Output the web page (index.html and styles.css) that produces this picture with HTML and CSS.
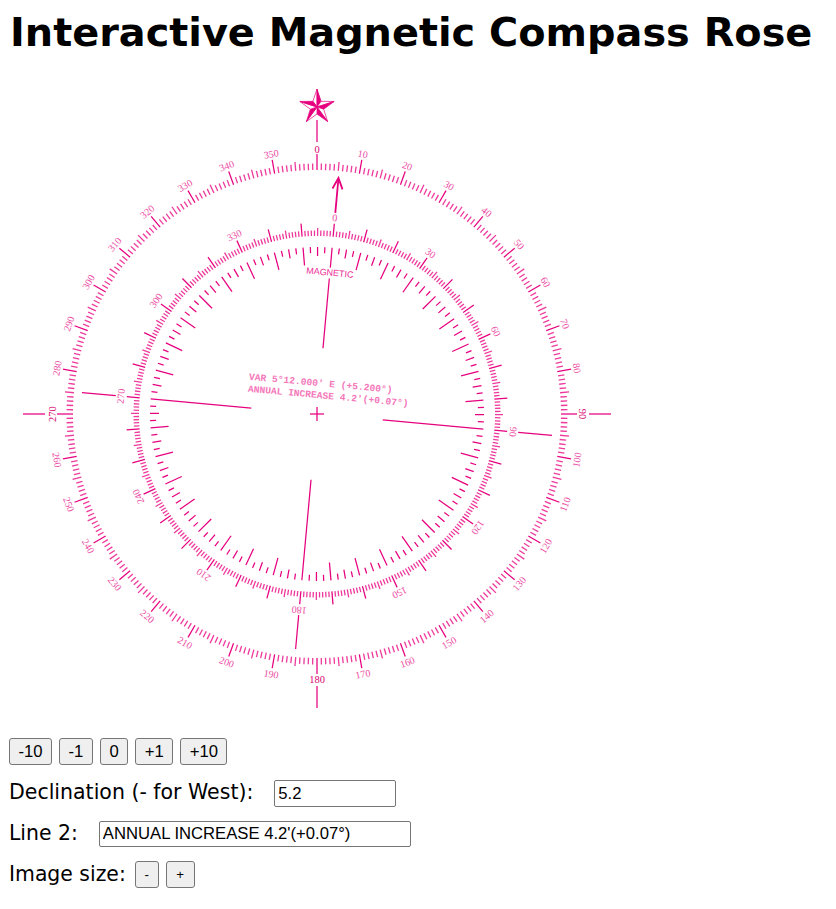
FILE: index.html
```html
<!DOCTYPE html>
<html lang="en">
<head>
<meta charset="utf-8">
<title>Interactive Magnetic Compass Rose</title>
<link rel="stylesheet" href="styles.css">
</head>
<body>
<h1 class="title">Interactive Magnetic Compass Rose</h1>
<svg id="rose" class="rose" viewBox="-308 -330 620 640" width="620" height="640" aria-label="Compass rose"></svg>
<div class="row buttons">
  <button class="btn" data-step="-10">-10</button>
  <button class="btn" data-step="-1">-1</button>
  <button class="btn" data-zero="1">0</button>
  <button class="btn" data-step="1">+1</button>
  <button class="btn" data-step="10">+10</button>
</div>
<div class="row field field-decl">
  <label class="lbl lbl-decl" for="decl">Declination (- for West):</label>
  <input id="decl" class="inp inp-decl" type="text" value="5.2">
</div>
<div class="row field field-line">
  <label class="lbl lbl-line" for="line2">Line 2:</label>
  <input id="line2" class="inp inp-line" type="text" value="ANNUAL INCREASE 4.2'(+0.07°)">
</div>
<div class="row field size">
  <span class="lbl">Image size:</span>
  <button class="btn small" id="smaller">-</button>
  <button class="btn small wide" id="bigger">+</button>
</div>
<script src="script.js"></script>
</body>
</html>
```
FILE: styles.css
```css
html, body { margin: 0; padding: 0; background: #fff; }
body { padding: 0 9px; font-family: "DejaVu Sans", Verdana, sans-serif; color: #000; overflow-x: hidden; }
.title { font-size: 39.8px; font-weight: 700; line-height: 47px; margin: 9px 0 28px 1px; white-space: nowrap; }
.rose { display: block; }
.rose line { stroke: #e6007e; stroke-width: 1.25; }
.rose .soft { stroke-width: 1.3; stroke: #ee3a9c; }
.rose text { fill: #e6007e; text-anchor: middle; }
.rose .lab { font-family: "Liberation Serif", serif; font-size: 10px; fill: #ec4aa3; }
.rose .card { font-family: "Liberation Serif", serif; font-size: 10.5px; fill: #d9006f; }
.rose .mag { font-family: "Liberation Sans", sans-serif; font-size: 9px; fill: #ea2b95; }
.rose .note { font-family: "Liberation Mono", monospace; font-size: 9.6px; font-weight: 700; fill: #f478ba; text-anchor: start; }
.rose .head { stroke-width: 1.8; fill: none; stroke: #e6007e; }
.rose .dark { fill: #e6007e; stroke: #e6007e; stroke-width: .7; }
.rose .pale { fill: #fff; stroke: #e6007e; stroke-width: .7; }
.row { display: flex; align-items: center; }
.buttons { gap: 7px; margin-top: 14px; }
.btn { font-family: "Liberation Sans", sans-serif; font-size: 16.67px; height: 27px; padding: 0 8.5px; background: #efefef; border: 1px solid #767676; border-radius: 3px; color: #000; }
.small { font-size: 13.3px; width: 24px; padding: 0; }
.wide { width: 29px; }
.field { margin-top: 14px; }
.field-decl { margin-top: 15px; }
.field-line { margin-top: 13px; }
.lbl { font-size: 20.4px; line-height: 27px; white-space: nowrap; }
.lbl-decl { margin-right: 21px; font-size: 20.5px; line-height: 25px; padding-bottom: 2px; }
.lbl-line { margin-right: 21px; }
.inp { font-family: "Liberation Sans", sans-serif; font-size: 16.67px; height: 27px; box-sizing: border-box; padding: 1px 3px; border: 1px solid #767676; border-radius: 2px; color: #000; background: #fff; }
.inp-decl { width: 122px; }
.inp-line { width: 312px; height: 26px; }
.size { gap: 7px; }
.size .lbl { margin-right: 2px; }
```
FILE: script.js
```js
(function () {
  var NS = "http://www.w3.org/2000/svg";
  var svg = document.getElementById("rose");
  var decl = document.getElementById("decl");
  var line2 = document.getElementById("line2");
  var scale = 1;

  function el(parent, name, attrs, text) {
    var n = document.createElementNS(NS, name);
    for (var k in attrs) n.setAttribute(k, attrs[k]);
    if (text !== undefined) n.textContent = text;
    parent.appendChild(n);
    return n;
  }
  function radial(g, deg, r1, r2, cls) {
    var a = deg * Math.PI / 180, s = Math.sin(a), c = Math.cos(a);
    var attrs = { x1: (r1 * s).toFixed(2), y1: (-r1 * c).toFixed(2), x2: (r2 * s).toFixed(2), y2: (-r2 * c).toFixed(2) };
    if (cls) attrs["class"] = cls;
    el(g, "line", attrs);
  }
  function label(g, deg, r, txt, cls, flip) {
    var t = el(g, "g", { transform: "rotate(" + deg + ") translate(0 " + (-r) + ")" + (flip ? " rotate(180)" : "") });
    el(t, "text", { "class": cls, y: 3.5 }, txt);
  }
  function star(g) {
    var cy = -307, R = 18, r = 7;
    for (var i = 0; i < 5; i++) {
      var a = i * 72 * Math.PI / 180, l = a - 36 * Math.PI / 180, h = a + 36 * Math.PI / 180;
      var tip = (R * Math.sin(a)).toFixed(2) + "," + (cy - R * Math.cos(a)).toFixed(2);
      var p1 = (r * Math.sin(l)).toFixed(2) + "," + (cy - r * Math.cos(l)).toFixed(2);
      var p2 = (r * Math.sin(h)).toFixed(2) + "," + (cy - r * Math.cos(h)).toFixed(2);
      var c = "0," + cy;
      el(g, "polygon", { "class": "pale", points: c + " " + tip + " " + p1 });
      el(g, "polygon", { "class": "dark", points: c + " " + tip + " " + p2 });
    }
  }
  function render() {
    var d = parseFloat(decl.value) || 0;
    svg.textContent = "";
    var outer = el(svg, "g", {});
    for (var i = 0; i < 360; i++) {
      var len = i % 90 === 0 ? 260 : i % 10 === 0 ? 258 : i % 5 === 0 ? 253 : 250.5;
      radial(outer, i, 244, len, i % 10 ? "soft" : "");
      if (i % 10 === 0) label(outer, i, i % 90 === 0 ? 265 : 264, String(i), i % 90 === 0 ? "card" : "lab", i > 90 && i < 270);
    }
    [0, 90, 180, 270].forEach(function (q) { radial(outer, q, 272, 294); });
    star(outer);
    radial(outer, 0, -7, 7);
    radial(outer, 90, -7, 7);

    var inner = el(svg, "g", { transform: "rotate(" + d + ")" });
    for (var j = 0; j < 360; j++) {
      var o = j % 10 === 0 ? 191 : j % 5 === 0 ? 186 : 183.5;
      radial(inner, j, 178, o, j % 10 ? "soft" : "");
      if (j % 30 === 0) label(inner, j, 197, String(j), "lab");
    }
    for (var k = 0; k < 360; k += 2.5) {
      if (k % 90 === 0) continue;
      var n = k % 10 === 0 ? 149 : k % 5 === 0 ? 158 : 161;
      radial(inner, k, n, 167);
    }
    [90, 180, 270].forEach(function (q) {
      radial(inner, q, 202, 236);
      radial(inner, q, 66, 167);
    });
    radial(inner, 0, 66, 136);
    radial(inner, 0, 147, 167);
    radial(inner, 0, 202, 235, "head");
    el(inner, "polyline", { "class": "head", points: "-5,-226 0,-237 5,-226" });
    el(inner, "text", { "class": "mag", x: 0, y: -139 }, "MAGNETIC");
    var abs = Math.abs(d), deg = Math.floor(abs), min = ((abs - deg) * 60).toFixed(3);
    var line1 = "VAR " + deg + "°" + min + "' " + (d < 0 ? "W" : "E") + " (" + (d < 0 ? "-" : "+") + abs.toFixed(3) + "°)";
    el(inner, "text", { "class": "note", x: -71, y: -28 }, line1);
    el(inner, "text", { "class": "note", x: -71, y: -16 }, line2.value);
  }
  document.querySelectorAll("[data-step]").forEach(function (b) {
    b.addEventListener("click", function () {
      decl.value = Math.round(((parseFloat(decl.value) || 0) + Number(b.dataset.step)) * 1000) / 1000;
      render();
    });
  });
  document.querySelector("[data-zero]").addEventListener("click", function () { decl.value = 0; render(); });
  decl.addEventListener("input", render);
  line2.addEventListener("input", render);
  function resize(f) {
    scale *= f;
    svg.setAttribute("width", 620 * scale);
    svg.setAttribute("height", 640 * scale);
  }
  document.getElementById("smaller").addEventListener("click", function () { resize(0.9); });
  document.getElementById("bigger").addEventListener("click", function () { resize(1.1); });
  render();
})();
```
